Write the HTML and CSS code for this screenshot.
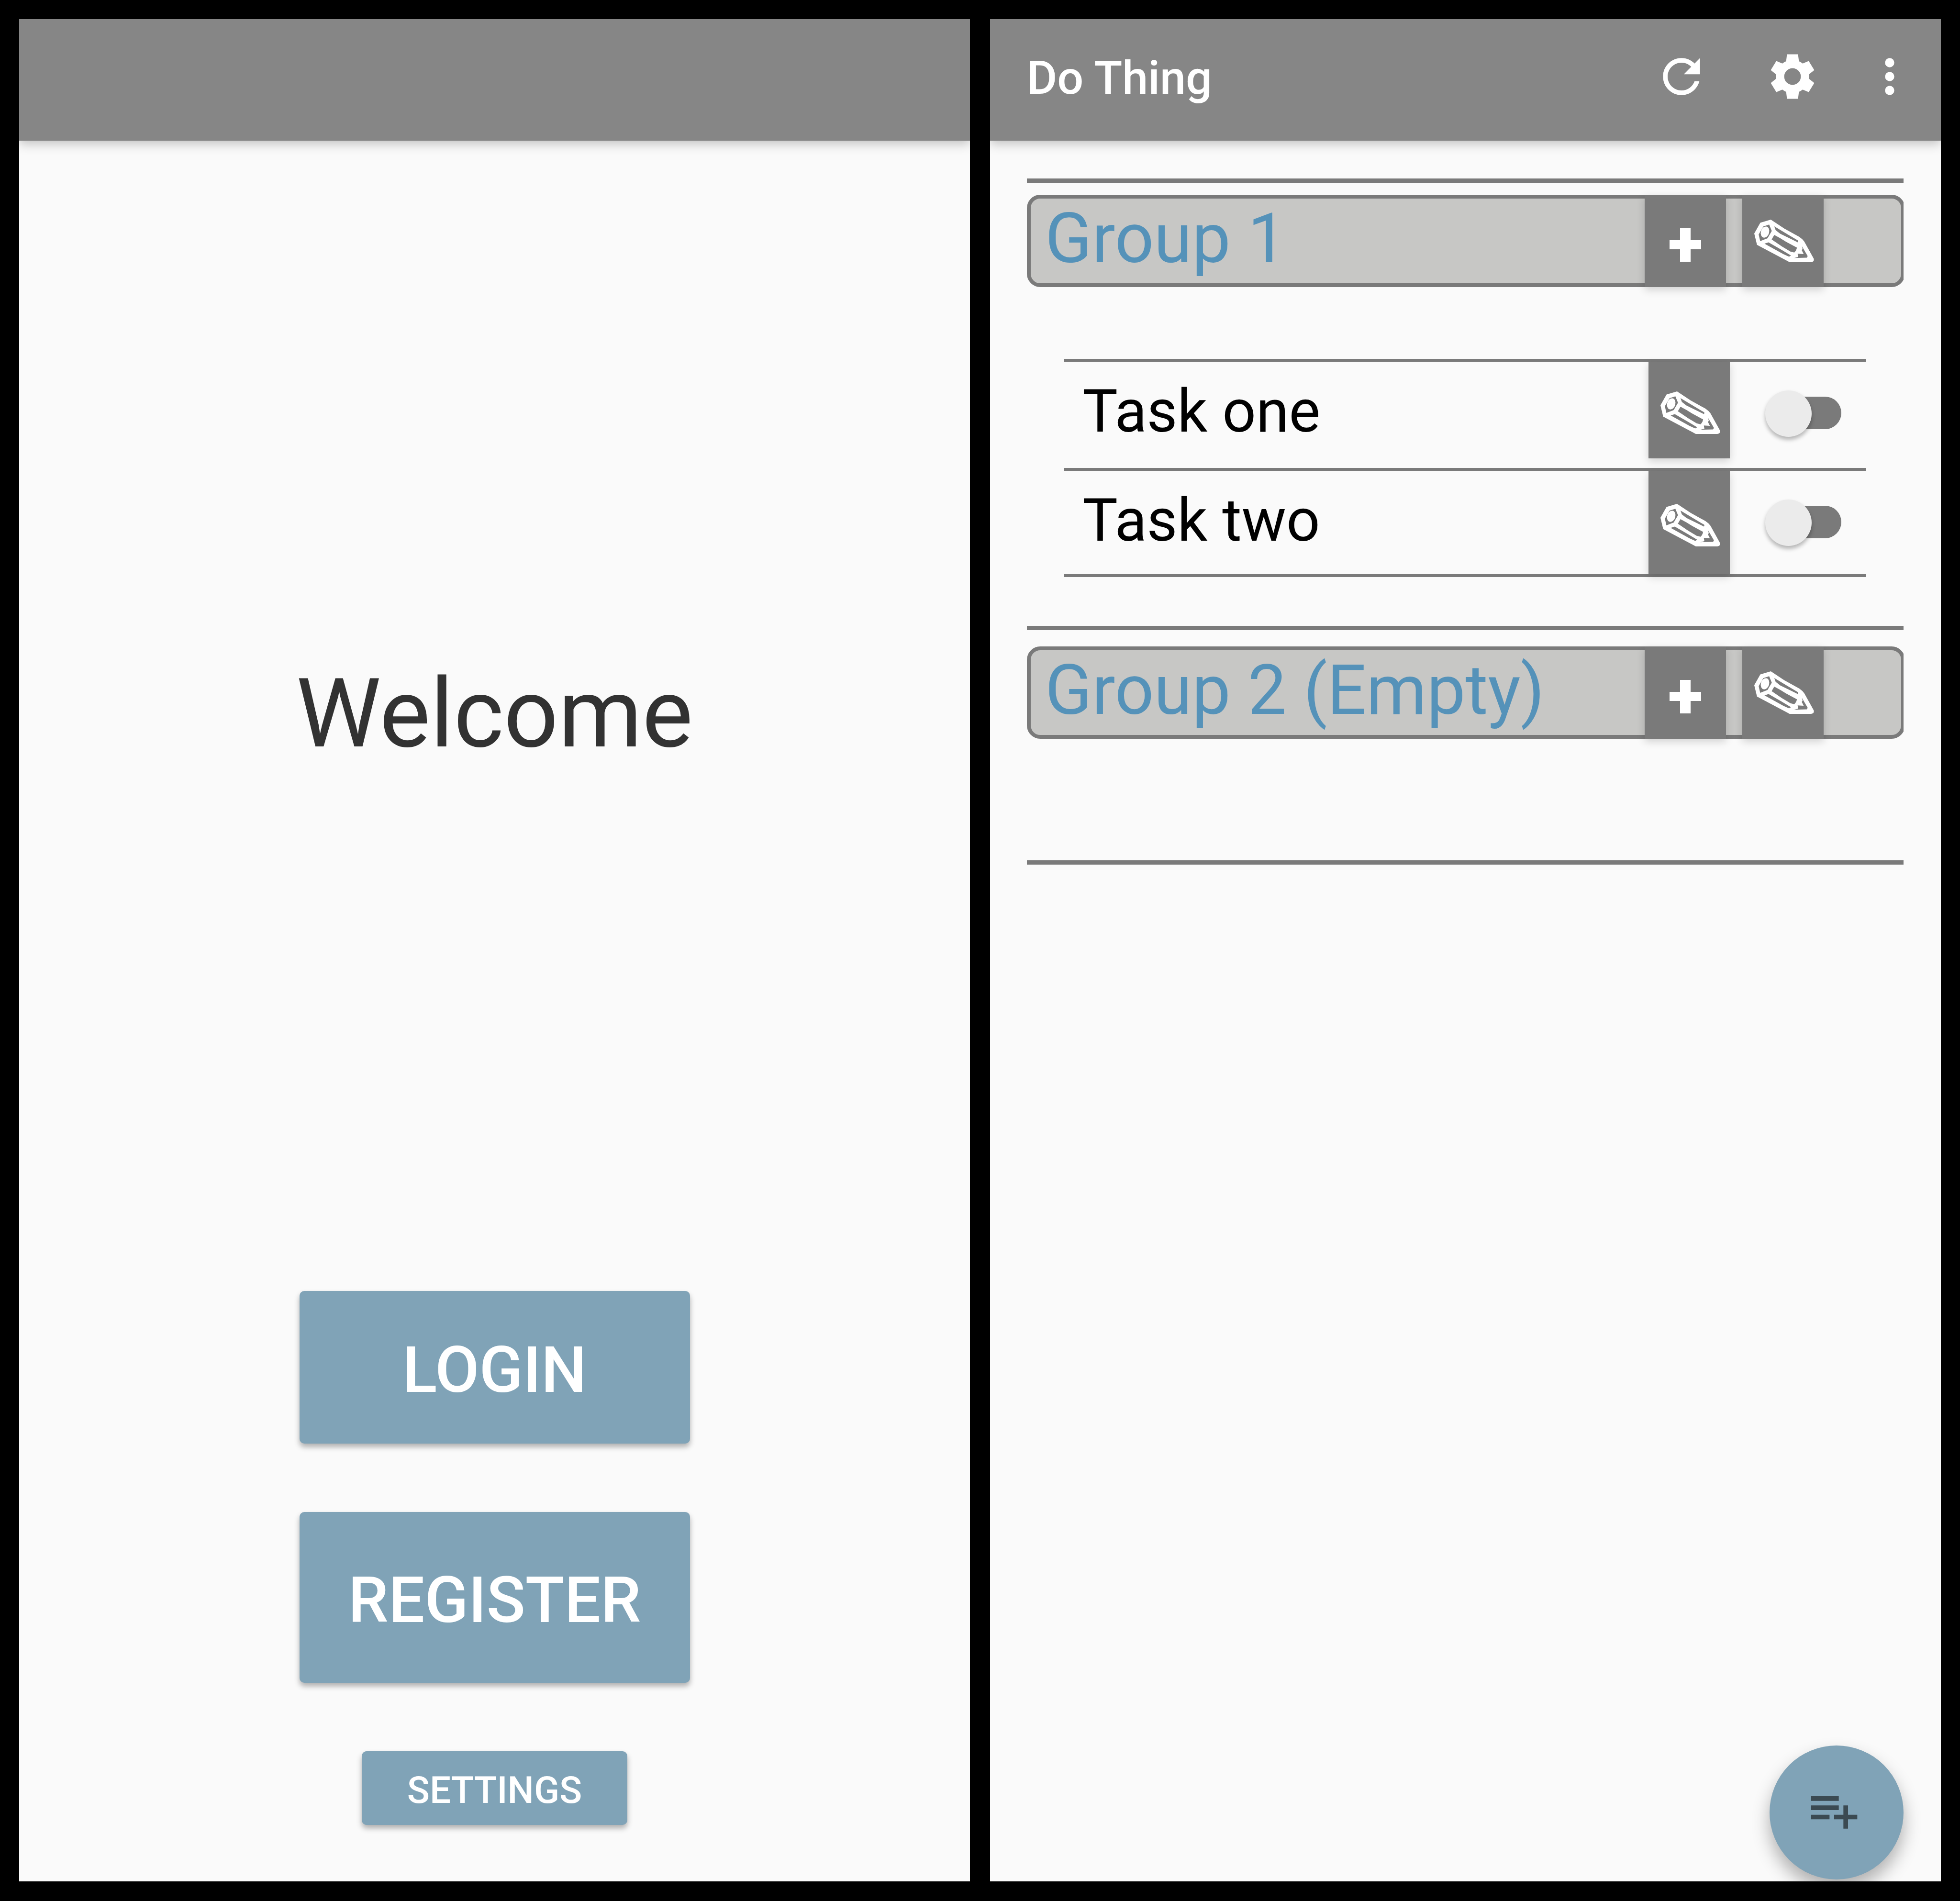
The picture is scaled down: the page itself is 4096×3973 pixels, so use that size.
FILE: index.html
```html
<!DOCTYPE html>
<html lang="en">
<head>
  <meta charset="utf-8">
  <meta name="viewport" content="width=device-width, initial-scale=1">
  <title>Do Thing</title>
  <link rel="stylesheet" href="styles.css">
</head>
<body>
  <svg class="sprite" aria-hidden="true">
    <symbol id="pencil" viewBox="0 0 433 331" preserveAspectRatio="none">
      <path fill-rule="evenodd" d="M0 108 44 24 120 0 218 70 326 134Q348 150 362 170L431 304Q436 326 412 331H256L234 318 20 196ZM66 53 108 38 127 88 96 145 43 167 32 115ZM145 52 250 120 316 162Q320 166 315 177L275 155 188 110 155 82ZM145 119 188 144 230 172 309 218Q306 240 290 256L262 248 200 208 126 154ZM74 187 104 177 200 236 266 279 252 288 210 268ZM345 206 387 284 381 296 288 298 318 290 314 265 358 268 344 238 350 228Z"/>
      <ellipse cx="78" cy="97" rx="30" ry="44" transform="rotate(14 78 97)"/>
    </symbol>
    <symbol id="plus" viewBox="0 0 66 70">
      <path d="M22 0H44V25H66V44H44V70H22V44H0V25H22Z"/>
    </symbol>
  </svg>

  <main class="screens">
    <section class="screen welcome" aria-label="Welcome">
      <header class="toolbar"></header>
      <div class="welcome-body">
        <h1 class="welcome-title">Welcome</h1>
        <div class="welcome-actions">
          <button class="action login" type="button">LOGIN</button>
          <button class="action register" type="button">REGISTER</button>
          <button class="action settings" type="button">SETTINGS</button>
        </div>
      </div>
    </section>

    <section class="screen" aria-label="Tasks">
      <header class="toolbar">
        <h1 class="toolbar-title">Do Thing</h1>
        <div class="toolbar-actions">
          <button class="icon-button" type="button" aria-label="Refresh">
            <svg class="icon" viewBox="0 0 24 24"><path d="M17.65 6.35C16.2 4.9 14.21 4 12 4c-4.42 0-7.99 3.58-7.99 8s3.57 8 7.99 8c3.73 0 6.84-2.55 7.73-6h-2.08c-.82 2.33-3.04 4-5.65 4-3.31 0-6-2.69-6-6s2.69-6 6-6c1.66 0 3.14.69 4.22 1.78L13 11h7V4l-2.35 2.35z"/></svg>
          </button>
          <button class="icon-button" type="button" aria-label="Settings">
            <svg class="icon" viewBox="-12 -12 24 24"><path fill-rule="evenodd" d="M-2.4-9.6H2.4L2.75-6.6Q3.6-6.25 4.4-5.65L7-6.7 9.4-2.8 7.1-.95Q7.25 0 7.1.95L9.4 2.8 7 6.7 4.4 5.65Q3.6 6.25 2.75 6.6L2.4 9.6H-2.4L-2.75 6.6Q-3.6 6.25-4.4 5.65L-7 6.7-9.4 2.8-7.1.95Q-7.25 0-7.1-.95L-9.4-2.8-7-6.7-4.4-5.65Q-3.6-6.25-2.75-6.6ZM0-3.6A3.6 3.6 0 0 0 0 3.6 3.6 3.6 0 0 0 0-3.6Z"/></svg>
          </button>
          <button class="icon-button" type="button" aria-label="More options">
            <svg class="icon icon-narrow" viewBox="6 0 12 24"><circle cx="12" cy="6" r="2"/><circle cx="12" cy="12" r="2"/><circle cx="12" cy="18" r="2"/></svg>
          </button>
        </div>
      </header>

      <div class="groups">
        <section class="group">
          <div class="group-header">
            <h2 class="group-name">Group 1</h2>
            <button class="tile" type="button" aria-label="Add task to Group 1"><svg class="plus"><use href="#plus"/></svg></button>
            <button class="tile" type="button" aria-label="Edit Group 1"><svg class="pencil"><use href="#pencil"/></svg></button>
          </div>
          <ul class="tasks">
            <li class="task">
              <label class="task-name" for="task-one">Task one</label>
              <button class="tile" type="button" aria-label="Edit Task one"><svg class="pencil"><use href="#pencil"/></svg></button>
              <input class="switch" type="checkbox" id="task-one">
            </li>
            <li class="task">
              <label class="task-name" for="task-two">Task two</label>
              <button class="tile" type="button" aria-label="Edit Task two"><svg class="pencil"><use href="#pencil"/></svg></button>
              <input class="switch" type="checkbox" id="task-two">
            </li>
          </ul>
        </section>
        <section class="group">
          <div class="group-header">
            <h2 class="group-name">Group 2 (Empty)</h2>
            <button class="tile" type="button" aria-label="Add task to Group 2"><svg class="plus"><use href="#plus"/></svg></button>
            <button class="tile" type="button" aria-label="Edit Group 2"><svg class="pencil"><use href="#pencil"/></svg></button>
          </div>
        </section>
      </div>

      <button class="fab" type="button" aria-label="Add group">
        <svg class="icon" viewBox="0 0 24 24"><path d="M14 10H2v2h12v-2zm0-4H2v2h12V6zm4 8v-4h-2v4h-4v2h4v4h2v-4h4v-2h-4zM2 16h8v-2H2v2z"/></svg>
      </button>
    </section>
  </main>
</body>
</html>
```
FILE: styles.css
```css
:root {
  --bar: #868686;
  --line: #7a7a7a;
  --surface: #fafafa;
  --accent: #80a3b7;
}

* {
  box-sizing: border-box;
}

body {
  margin: 0;
  background: #000;
  font-family: Roboto, "Liberation Sans", sans-serif;
}

h1,
h2,
ul {
  margin: 0;
  padding: 0;
  font-weight: 400;
}

button {
  border: 0;
  padding: 0;
  background: none;
  color: #fff;
  font: inherit;
  cursor: pointer;
}

svg {
  display: block;
  fill: currentColor;
}

.sprite {
  position: absolute;
  width: 0;
  height: 0;
}

.screens {
  display: grid;
  grid-template-columns: 1fr 1fr;
  gap: 42px;
  min-height: 100vh;
  padding: 40px 40px 41px;
}

.screen {
  position: relative;
  display: flex;
  flex-direction: column;
  overflow: hidden;
  background: var(--surface);
}

/* Toolbar */

.toolbar {
  display: flex;
  align-items: center;
  justify-content: space-between;
  min-height: 254px;
  padding: 0 78px 8px 77px;
  background: var(--bar);
  box-shadow: 0 6px 22px rgba(0, 0, 0, 0.24);
  color: #fff;
}

.toolbar-title {
  font-size: 97px;
  font-weight: 500;
  line-height: 120px;
}

.toolbar-actions {
  display: flex;
  gap: 116px;
  padding-bottom: 7px;
}

.icon {
  width: 116px;
  height: 116px;
}

.icon-narrow {
  width: 58px;
}

/* Welcome screen */

.welcome-body {
  flex: 1;
  display: flex;
  flex-direction: column;
  align-items: center;
  justify-content: space-between;
  padding: 1078px 0 118px;
}

.welcome-title {
  color: #323232;
  font-size: 200px;
  line-height: 240px;
}

.welcome-actions {
  display: flex;
  flex-direction: column;
  align-items: center;
  gap: 143px;
}

.action {
  width: 816px;
  padding-top: 12px;
  border-radius: 10px;
  background: var(--accent);
  box-shadow: 0 7px 12px rgba(0, 0, 0, 0.3);
  font-size: 134px;
  font-weight: 500;
}

.login {
  height: 319px;
}

.register {
  height: 357px;
}

.settings {
  width: 555px;
  height: 154px;
  padding-top: 8px;
  font-size: 78px;
}

/* Groups */

.groups {
  padding: 79px 78px 0 77px;
}

.group {
  padding: 25px 0 102px;
  border-top: 9px solid var(--line);
}

.group + .group {
  padding: 34px 0 254px;
  border-bottom: 9px solid var(--line);
}

.group-header {
  display: flex;
  gap: 34px;
  height: 193px;
  margin-right: -3px;
  padding: 0 162px 0 30px;
  border: 8px solid var(--line);
  border-radius: 28px;
  background: #c7c7c5;
  clip-path: inset(-40px 3px -40px 0);
}

.group-name {
  flex: 1;
  color: #5592b9;
  font-size: 144px;
  line-height: 168px;
}

.tile {
  display: flex;
  align-items: center;
  justify-content: center;
  width: 170px;
  background: var(--line);
  box-shadow: 0 6px 16px rgba(0, 0, 0, 0.16);
}

.group-header .tile {
  margin: -8px 0;
}

.plus {
  width: 66px;
  height: 70px;
  margin-top: 16px;
}

.pencil {
  width: 125px;
  height: 89px;
  margin-left: 4px;
}

/* Tasks */

.tasks {
  margin: 150px 78px 0 77px;
  border-bottom: 6px solid var(--line);
  list-style: none;
}

.task {
  display: flex;
  min-height: 222px;
  padding: 0 52px 0 39px;
  border-top: 6px solid var(--line);
}

.task:first-child {
  min-height: 228px;
  padding-bottom: 20px;
}

.task-name {
  flex: 1;
  color: #000;
  font-size: 124px;
  line-height: 208px;
}

.task:first-child .task-name {
  margin-bottom: -6px;
}

.task .tile {
  padding-top: 11px;
}

.switch {
  position: relative;
  appearance: none;
  width: 159px;
  height: 97px;
  margin: 60px 0 0 74px;
  cursor: pointer;
}

.switch::before {
  content: "";
  position: absolute;
  inset: 13px 0 16px 12px;
  border-radius: 34px;
  background: var(--line);
}

.switch::after {
  content: "";
  position: absolute;
  top: 0;
  left: 0;
  width: 97px;
  height: 97px;
  border-radius: 50%;
  background: #ebebeb;
  box-shadow: 0 6px 8px rgba(0, 0, 0, 0.28);
}

.switch:checked::after {
  left: 62px;
}

/* Floating action button */

.fab {
  position: absolute;
  right: 78px;
  bottom: 4px;
  display: flex;
  align-items: center;
  justify-content: center;
  width: 280px;
  height: 280px;
  padding: 0 10px 10px 0;
  border-radius: 50%;
  background: var(--accent);
  box-shadow: 0 20px 36px rgba(0, 0, 0, 0.3);
  color: #3b4a52;
}
```
